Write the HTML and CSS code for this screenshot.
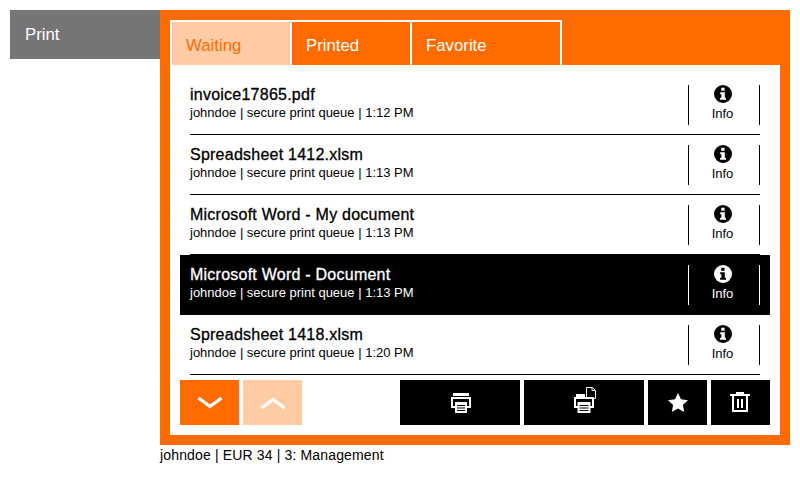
FILE: index.html
```html
<!DOCTYPE html>
<html lang="en">
<head>
<meta charset="utf-8">
<title>Print</title>
<link rel="stylesheet" href="styles.css">
</head>
<body>
<svg class="defs" width="0" height="0" aria-hidden="true">
  <symbol id="i-info" viewBox="0 0 18 18">
    <circle cx="9" cy="9" r="9" fill="currentColor"/>
    <path class="i-glyph" d="M7.200 2.800h3.400v3H7.200zM6.200 7.200h4.600v5.600h1.200v2H6.100v-2h1.300V9.200H6.200z"/>
  </symbol>
</svg>
<div class="screen">
  <nav class="side"><div class="side-item">Print</div></nav>
  <div class="content">
    <main class="panel">
      <div class="tabs">
        <div class="tab tab-active">Waiting</div>
        <div class="tab">Printed</div>
        <div class="tab">Favorite</div>
      </div>
      <div class="sheet">
        <ul class="jobs">
          <li class="job"><div class="job-text"><div class="job-name">invoice17865.pdf</div><div class="job-meta">johndoe | secure print queue | 1:12 PM</div></div><div class="info"><svg class="info-icon"><use href="#i-info"/></svg><span>Info</span></div></li>
          <li class="job"><div class="job-text"><div class="job-name">Spreadsheet 1412.xlsm</div><div class="job-meta">johndoe | secure print queue | 1:13 PM</div></div><div class="info"><svg class="info-icon"><use href="#i-info"/></svg><span>Info</span></div></li>
          <li class="job"><div class="job-text"><div class="job-name">Microsoft Word - My document</div><div class="job-meta">johndoe | secure print queue | 1:13 PM</div></div><div class="info"><svg class="info-icon"><use href="#i-info"/></svg><span>Info</span></div></li>
          <li class="job job-selected"><div class="job-text"><div class="job-name">Microsoft Word - Document</div><div class="job-meta">johndoe | secure print queue | 1:13 PM</div></div><div class="info"><svg class="info-icon"><use href="#i-info"/></svg><span>Info</span></div></li>
          <li class="job"><div class="job-text"><div class="job-name">Spreadsheet 1418.xlsm</div><div class="job-meta">johndoe | secure print queue | 1:20 PM</div></div><div class="info"><svg class="info-icon"><use href="#i-info"/></svg><span>Info</span></div></li>
        </ul>
        <div class="toolbar">
          <div class="btn btn-page"><svg width="26" height="14" viewBox="0 0 26 14"><path d="M1.500 2l11.500 8.500L24.500 2" fill="none" stroke="#fff" stroke-width="3.400"/></svg></div>
          <div class="btn btn-page btn-off"><svg width="26" height="14" viewBox="0 0 26 14"><path d="M1.500 12L13 3.500 24.500 12" fill="none" stroke="#fff" stroke-width="3.400"/></svg></div>
          <div class="spacer"></div>
          <div class="btn btn-wide"><svg class="icon-print" width="20" height="20" viewBox="0 0 20 20"><path d="M2 0h16v3H2z" fill="#fff"/><path d="M4 14H1V5h18v9h-3" fill="none" stroke="#fff" stroke-width="2"/><path d="M4 9h12v11H4z" fill="#fff"/><path d="M6 12.500h8M6 15h8M6 17.500h8" stroke="#000"/></svg></div>
          <div class="btn btn-wide"><svg class="icon-copy" width="22" height="26" viewBox="0 0 22 26"><path d="M12.500.5h6l3 3v8h-9z" fill="none" stroke="#fff"/><path d="M18 .5v3h3" fill="none" stroke="#fff"/><path d="M2 7h9v3H2z" fill="#fff"/><path d="M4 20H1v-9h18v9h-3" fill="none" stroke="#fff" stroke-width="2"/><path d="M3.500 15h13v11h-13z" fill="#fff"/><path d="M5.500 18.500h9M5.500 21h9M5.500 23.500h9" stroke="#000"/></svg></div>
          <div class="btn btn-small"><svg width="20" height="19" viewBox="0 0 20 19"><path fill="#fff" d="M10 0l3 6.300 7 .9-5.100 4.800 1.300 6.900L10 15.500 3.800 18.900l1.300-6.900L0 7.200l7-.9z"/></svg></div>
          <div class="btn btn-small"><svg class="icon-trash" width="20" height="20" viewBox="0 0 20 20"><path d="M7 2V1h6v1M0 3h20M3 4v15h14V4M8 7v9M12 7v9" fill="none" stroke="#fff" stroke-width="2"/></svg></div>
        </div>
      </div>
    </main>
    <footer class="status">johndoe | EUR 34 | 3: Management</footer>
  </div>
</div>
</body>
</html>
```
FILE: styles.css
```css
* { box-sizing: border-box; }
html, body { margin: 0; height: 100%; background: #fff; }
body { font-family: "Liberation Sans", Arial, sans-serif; color: #000; overflow: hidden; }
.defs { position: absolute; }
.screen { display: flex; width: 800px; height: 480px; padding: 10px 10px 0; }
.side { width: 150px; flex: none; }
.side-item { height: 49px; padding: 16px 15px 0; background: #767476; color: #fff; font-size: 16.800px; line-height: 17px; }
.content { width: 630px; flex: none; }
.panel { height: 435px; background: #ff6b00; padding: 10px; display: flex; flex-direction: column; }
.tabs { display: flex; height: 45px; flex: none; }
.tab { width: 122px; margin-right: -2px; height: 45px; padding: 9px 14px 0; border: 2px solid #fff; border-bottom: 0; color: #fff; font-size: 16.800px; line-height: 30px; }
.tab:last-child { width: 152px; }
.tab-active { background: #ffcba4; color: #ff6b00; }
.sheet { flex: 1; background: #fff; padding: 10px; display: flex; flex-direction: column; }
.jobs { list-style: none; margin: 0; padding: 0; height: 305px; flex: none; }
.job { height: 60px; padding: 10px; display: flex; align-items: stretch; position: relative; }
.job::after { content: ""; position: absolute; left: 10px; right: 10px; bottom: 0; height: 1px; background: #000; }
.job-selected { background: #000; color: #fff; }
.job-text { flex: 1; padding-top: 1px; }
.job-name { font-size: 16px; line-height: 17px; -webkit-text-stroke: .3px currentColor; letter-spacing: .24px; }
.job-meta { font-size: 13px; line-height: 14px; margin-top: 3px; }
.info { width: 72px; flex: none; height: 40px; border-left: 1px solid currentColor; border-right: 1px solid currentColor; display: flex; flex-direction: column; align-items: center; font-size: 13px; line-height: 15px; padding-right: 3px; --glyph: #fff; }
.job-selected .info { --glyph: #000; }
.info-icon { width: 18px; height: 18px; margin-bottom: 3px; display: block; }
.i-glyph { fill: var(--glyph); }
.toolbar { display: flex; gap: 4px; height: 45px; margin-top: auto; }
.spacer { flex: 1; }
.btn { height: 45px; background: #000; display: flex; align-items: center; justify-content: center; flex: none; }
.btn-page { width: 59px; background: #ff6b00; }
.btn-off { background: #ffcba4; }
.btn-wide { width: 120px; }
.btn-small { width: 59px; }
.icon-print { margin-left: 2px; }
.icon-copy { margin: 0 0 5px 2px; }
.icon-trash { margin-right: 2px; margin-bottom: 1px; }
.status { font-size: 14px; line-height: 16px; padding-top: 2px; letter-spacing: .15px; }
```
